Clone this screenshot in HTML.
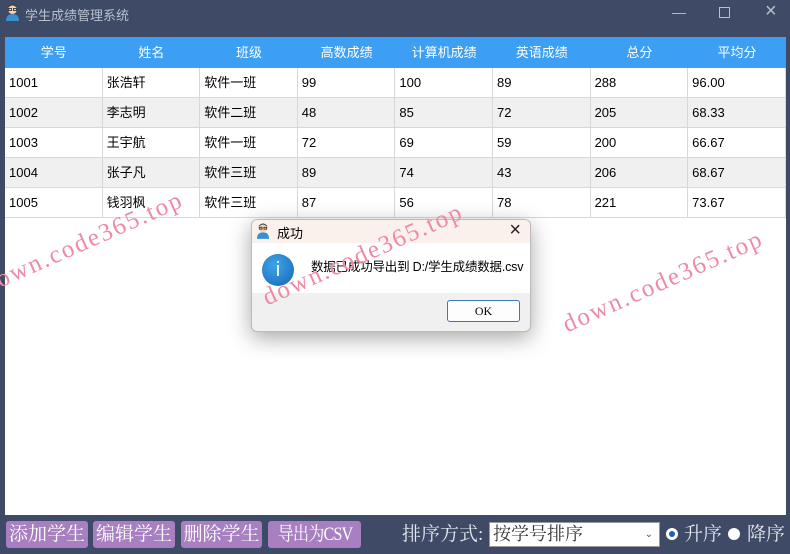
<!DOCTYPE html>
<html><head><meta charset="utf-8"><style>
*{margin:0;padding:0;box-sizing:border-box}
body{width:790px;height:554px;background:#3e4a66;position:relative;overflow:hidden;font-family:"Liberation Sans","Noto Sans CJK SC",sans-serif}
.title{position:absolute;left:25px;top:5px;color:#b9c0cc;font-size:13px}
.wc{position:absolute;color:#b9c0cc}
.table{position:absolute;left:5px;top:37px;width:781px;height:478px;background:#fff}
.row{display:flex;height:30px;border-bottom:1px solid #d8d8d8}
.row div{width:97.6px;border-right:1px solid #d8d8d8;font-size:13px;line-height:29px;padding-left:4px;color:#000}
.hdr{background:#3c9ff4;height:31px;border:none}
.hdr div{color:#fff;text-align:center;padding:0;border:none;line-height:31px}
.alt{background:#f0f0f0}
.wm{position:absolute;font-family:"Liberation Serif",serif;color:#ee8aa6;font-size:25px;letter-spacing:2px;transform:rotate(-24deg);transform-origin:left bottom;white-space:nowrap}
.dlg{position:absolute;left:251px;top:219px;width:280px;height:113px;border:1px solid #bbb;border-radius:6px;overflow:hidden;box-shadow:0 6px 22px rgba(0,0,0,.35);background:#f0f0f0}
.btn{position:absolute;top:521px;height:27px;background:#a87fc0;color:#fff;font-family:"Liberation Serif","Noto Serif CJK SC",serif;font-size:19px;line-height:27px;text-align:center;border-radius:3px;white-space:nowrap;overflow:hidden}
</style></head><body>
<svg style="position:absolute;left:5px;top:4px" width="15" height="17" viewBox="0 0 15 17"><circle cx="7.5" cy="5.5" r="4.5" fill="#f3d2b3"/><path d="M3 4 Q7.5 -1 12 4 L12 3 Q7.5 -2 3 3Z" fill="#333"/><rect x="3.5" y="4.5" width="3" height="2" fill="none" stroke="#222" stroke-width=".8"/><rect x="8.5" y="4.5" width="3" height="2" fill="none" stroke="#222" stroke-width=".8"/><path d="M1 17 Q1 10 7.5 10 Q14 10 14 17Z" fill="#3a8fd0"/></svg>
<div class="title">学生成绩管理系统</div>
<div class="wc" style="left:672px;top:4px;font-size:14px">—</div>
<div class="wc" style="left:719px;top:7px;width:11px;height:11px;border:1px solid #b9c0cc"></div>
<div class="wc" style="left:765px;top:0px;font-size:20px">×</div>
<div class="table">
<div class="row hdr"><div>学号</div><div>姓名</div><div>班级</div><div>高数成绩</div><div>计算机成绩</div><div>英语成绩</div><div>总分</div><div>平均分</div></div>
<div class="row"><div>1001</div><div>张浩轩</div><div>软件一班</div><div>99</div><div>100</div><div>89</div><div>288</div><div>96.00</div></div>
<div class="row alt"><div>1002</div><div>李志明</div><div>软件二班</div><div>48</div><div>85</div><div>72</div><div>205</div><div>68.33</div></div>
<div class="row"><div>1003</div><div>王宇航</div><div>软件一班</div><div>72</div><div>69</div><div>59</div><div>200</div><div>66.67</div></div>
<div class="row alt"><div>1004</div><div>张子凡</div><div>软件三班</div><div>89</div><div>74</div><div>43</div><div>206</div><div>68.67</div></div>
<div class="row"><div>1005</div><div>钱羽枫</div><div>软件三班</div><div>87</div><div>56</div><div>78</div><div>221</div><div>73.67</div></div>
</div>
<div class="dlg">
<div style="height:23px;background:#fbf1ec;position:relative">
<svg style="position:absolute;left:4px;top:3px" width="14" height="16" viewBox="0 0 15 17"><circle cx="7.5" cy="5.5" r="4.5" fill="#f3d2b3"/><path d="M3 4 Q7.5 -1 12 4 L12 3 Q7.5 -2 3 3Z" fill="#333"/><rect x="3.5" y="4.5" width="3" height="2" fill="none" stroke="#222" stroke-width=".8"/><rect x="8.5" y="4.5" width="3" height="2" fill="none" stroke="#222" stroke-width=".8"/><path d="M1 17 Q1 10 7.5 10 Q14 10 14 17Z" fill="#3a8fd0"/></svg>
<span style="position:absolute;left:25px;top:3px;font-size:13px">成功</span>
<span style="position:absolute;right:9px;top:-1px;font-size:20px;color:#222">×</span></div>
<div style="height:50px;background:#fff;position:relative">
<div style="position:absolute;left:10px;top:11px;width:32px;height:32px;border-radius:50%;background:radial-gradient(circle at 40% 35%,#3fa4ea,#1466b4);color:#fff;text-align:center;font-size:20px;line-height:32px;font-family:'Liberation Sans'">i</div>
<span style="position:absolute;left:59px;top:13px;font-size:12.5px;white-space:nowrap;letter-spacing:-0.2px">数据已成功导出到 D:/学生成绩数据.csv</span></div>
<div style="position:absolute;left:195px;top:80px;width:73px;height:22px;background:#fdfdfd;border:1px solid #3a78b8;border-radius:3px;font-family:'Liberation Serif',serif;font-size:12px;text-align:center;line-height:20px">OK</div>
</div>
<div class="wm" style="left:-10px;top:272px">down.code365.top</div>
<div class="wm" style="left:270px;top:284px">down.code365.top</div>
<div class="wm" style="left:570px;top:311px">down.code365.top</div>
<div class="btn" style="left:6px;width:82px">添加学生</div>
<div class="btn" style="left:93px;width:82px">编辑学生</div>
<div class="btn" style="left:181px;width:81px">删除学生</div>
<div class="btn" style="left:268px;width:93px;letter-spacing:-1px"><span style="display:inline-block;transform:scaleX(0.85)">导出为CSV</span></div>
<div style="position:absolute;left:402px;top:521px;color:#e6e8ee;font-family:'Liberation Serif','Noto Serif CJK SC',serif;font-size:19px;line-height:27px;white-space:nowrap">排序方式:</div>
<div style="position:absolute;left:489px;top:522px;width:171px;height:25px;background:#fff;border:1px solid #999;font-family:'Liberation Serif','Noto Serif CJK SC',serif;font-size:18px;line-height:23px;padding-left:3px;color:#333">按学号排序<span style="position:absolute;right:6px;top:0;font-size:10px;color:#555">⌄</span></div>
<div style="position:absolute;left:666px;top:528px;width:12px;height:12px;border-radius:50%;background:#fff;border:3px solid #fff"><div style="width:6px;height:6px;border-radius:50%;background:#1d5fc0"></div></div>
<div style="position:absolute;left:684px;top:521px;color:#e6e8ee;font-family:'Liberation Serif','Noto Serif CJK SC',serif;font-size:19px;line-height:27px">升序</div>
<div style="position:absolute;left:728px;top:528px;width:12px;height:12px;border-radius:50%;background:#fff"></div>
<div style="position:absolute;left:747px;top:521px;color:#e6e8ee;font-family:'Liberation Serif','Noto Serif CJK SC',serif;font-size:19px;line-height:27px">降序</div>
</body></html>
